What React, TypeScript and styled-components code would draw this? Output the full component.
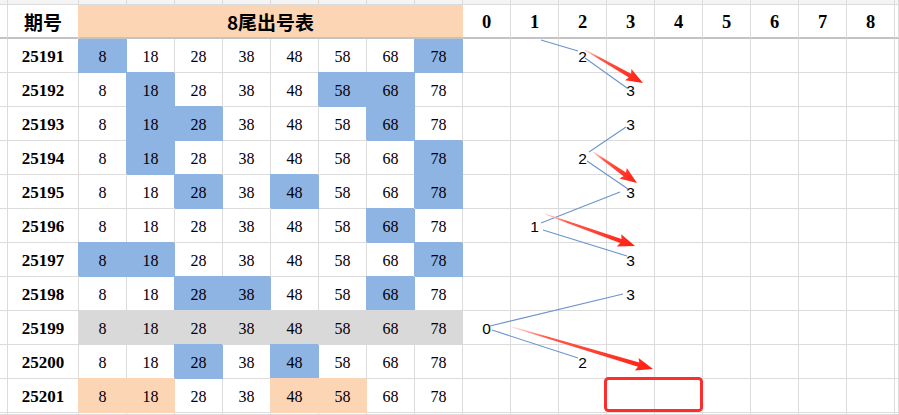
import React from "react";
import styled, { createGlobalStyle } from "styled-components";

const GRID = "#dcdcdc";
const BLUE = "#8db4e2";
const GRAY = "#d9d9d9";
const PEACH = "#fcd5b4";
const HEAD_LINE = "#c3c3c3";

const Global = createGlobalStyle`
  html, body { margin: 0; padding: 0; background: #fff; }
  body { width: 899px; height: 415px; overflow: hidden; }
`;

const Wrap = styled.div`
  position: relative;
  width: 899px;
  height: 415px;
  overflow: hidden;
`;

const Sheet = styled.div`
  display: grid;
  grid-template-columns: 8px 71px repeat(17, 48px) 1fr;
  grid-template-rows: 5px 34px repeat(11, 34px) 1fr;
  height: 415px;
`;

const Cell = styled.div<{ $fill?: string; $top?: boolean }>`
  box-sizing: border-box;
  display: flex;
  align-items: center;
  justify-content: center;
  min-width: 0;
  background: ${(p) => p.$fill ?? "#fff"};
  border-right: 1px solid ${(p) => p.$fill ?? GRID};
  border-bottom: 1px solid ${(p) => p.$fill ?? GRID};
  ${(p) =>
    p.$fill
      ? `box-shadow: ${p.$top ? "-1px 0 0 0" : "-1px -1px 0 0"} ${p.$fill};`
      : ""}
`;

const StripCell = styled(Cell)`
  background: #f4f4f4;
`;

const HeadCell = styled(Cell)<{ $span?: number }>`
  border-bottom: 2px solid ${HEAD_LINE};
  grid-column: span ${(p) => p.$span ?? 1};
  font-weight: 700;
  color: #000;
`;

const HeadTitle = styled(HeadCell)`
  font-family: "Noto Sans CJK SC", "Liberation Serif", serif;
  font-size: 19px;
  padding-top: 1px;
`;

const HeadDigit = styled(HeadCell)`
  font-family: "Liberation Serif", serif;
  font-size: 18.5px;
  padding-top: 2px;
`;

const PeriodCell = styled(Cell)`
  font-family: "Liberation Serif", serif;
  font-weight: 700;
  font-size: 17px;
  color: #000;
  padding-top: 2px;
`;

const NumCell = styled(Cell)`
  font-family: "Liberation Serif", serif;
  font-size: 16px;
  color: #000;
  padding-top: 2px;
`;

const TrendCell = styled(Cell)`
  font-family: "Liberation Sans", Arial, sans-serif;
  font-size: 15.5px;
  color: #000;
  padding-top: 3px;
`;

const Overlay = styled.svg`
  position: absolute;
  left: 0;
  top: 0;
  width: 899px;
  height: 415px;
  pointer-events: none;
`;

type Row = {
  p: string;
  hi?: number[];
  gray?: boolean;
  peach?: number[];
  t: number | null;
};

const rows: Row[] = [
  { p: "25191", hi: [0, 7], t: 2 },
  { p: "25192", hi: [1, 5, 6], t: 3 },
  { p: "25193", hi: [1, 2, 6], t: 3 },
  { p: "25194", hi: [1, 7], t: 2 },
  { p: "25195", hi: [2, 4, 7], t: 3 },
  { p: "25196", hi: [6], t: 1 },
  { p: "25197", hi: [0, 1, 7], t: 3 },
  { p: "25198", hi: [2, 3, 6], t: 3 },
  { p: "25199", gray: true, t: 0 },
  { p: "25200", hi: [2, 4], t: 2 },
  { p: "25201", peach: [0, 1, 4, 5], t: null },
];

const nums = [8, 18, 28, 38, 48, 58, 68, 78];
const trendCols = [0, 1, 2, 3, 4, 5, 6, 7, 8];

const blueLines: [number, number, number, number][] = [
  [541, 40, 578, 51],
  [585, 58, 627, 88],
  [626, 127, 589, 152],
  [587, 161, 628, 189],
  [620, 192, 541, 223],
  [543, 230, 627, 256],
  [623, 294, 490, 326],
  [492, 330, 578, 358],
];

const arrows: [number, number, number, number][] = [
  [585, 50, 643, 83],
  [593, 152, 637, 183],
  [545, 214, 635, 246],
  [512, 327, 653, 369],
];

function arrowPath(sx: number, sy: number, tx: number, ty: number) {
  const dx = tx - sx;
  const dy = ty - sy;
  const L = Math.hypot(dx, dy);
  const ux = dx / L;
  const uy = dy / L;
  const nx = -uy;
  const ny = ux;
  const hl = 15;
  const hw = 6.5;
  const s0 = 0.5;
  const s1 = 2.2;
  const hx = tx - ux * hl;
  const hy = ty - uy * hl;
  const bx = hx - ux * 2;
  const by = hy - uy * 2;
  const pts: [number, number][] = [
    [sx + nx * s0, sy + ny * s0],
    [hx + nx * s1, hy + ny * s1],
    [bx + nx * hw, by + ny * hw],
    [tx, ty],
    [bx - nx * hw, by - ny * hw],
    [hx - nx * s1, hy - ny * s1],
    [sx - nx * s0, sy - ny * s0],
  ];
  return pts.map((p) => `${p[0].toFixed(1)},${p[1].toFixed(1)}`).join(" ");
}

export default function App() {
  return (
    <>
      <Global />
      <Wrap>
        <Sheet>
          {Array.from({ length: 20 }).map((_, i) => (
            <StripCell key={`top-${i}`} />
          ))}

          <HeadCell />
          <HeadTitle>期号</HeadTitle>
          <HeadTitle $span={8} $fill={PEACH} $top>
            8尾出号表
          </HeadTitle>
          {trendCols.map((c) => (
            <HeadDigit key={`h${c}`}>{c}</HeadDigit>
          ))}
          <HeadCell />

          {rows.map((r, ri) => (
            <React.Fragment key={r.p}>
              <Cell />
              <PeriodCell>{r.p}</PeriodCell>
              {nums.map((n, i) => {
                let fill: string | undefined;
                if (r.gray) fill = GRAY;
                else if (r.peach?.includes(i)) fill = PEACH;
                else if (r.hi?.includes(i)) fill = BLUE;
                return (
                  <NumCell key={n} $fill={fill} $top={ri === 0}>
                    {n}
                  </NumCell>
                );
              })}
              {trendCols.map((c) => (
                <TrendCell key={`t${c}`}>{r.t === c ? c : ""}</TrendCell>
              ))}
              <Cell />
            </React.Fragment>
          ))}

          {Array.from({ length: 20 }).map((_, i) => (
            <Cell key={`bottom-${i}`} />
          ))}
        </Sheet>

        <Overlay viewBox="0 0 899 415">
          <defs>
            {arrows.map(([sx, sy, tx, ty], i) => (
              <linearGradient
                key={`g${i}`}
                id={`ag${i}`}
                gradientUnits="userSpaceOnUse"
                x1={sx}
                y1={sy}
                x2={tx}
                y2={ty}
              >
                <stop offset="0" stopColor="#ffe0dc" />
                <stop offset="0.25" stopColor="#ff5a4a" />
                <stop offset="1" stopColor="#ff1f12" />
              </linearGradient>
            ))}
          </defs>
          {blueLines.map(([x1, y1, x2, y2], i) => (
            <line
              key={`l${i}`}
              x1={x1}
              y1={y1}
              x2={x2}
              y2={y2}
              stroke="#6a94cc"
              strokeWidth={1.1}
            />
          ))}
          {arrows.map(([sx, sy, tx, ty], i) => (
            <polygon key={`a${i}`} points={arrowPath(sx, sy, tx, ty)} fill={`url(#ag${i})`} />
          ))}
          <rect
            x={605.5}
            y={378.5}
            width={96}
            height={32}
            rx={3}
            ry={3}
            fill="none"
            stroke="#ff2d2d"
            strokeWidth={3}
          />
        </Overlay>
      </Wrap>
    </>
  );
}
